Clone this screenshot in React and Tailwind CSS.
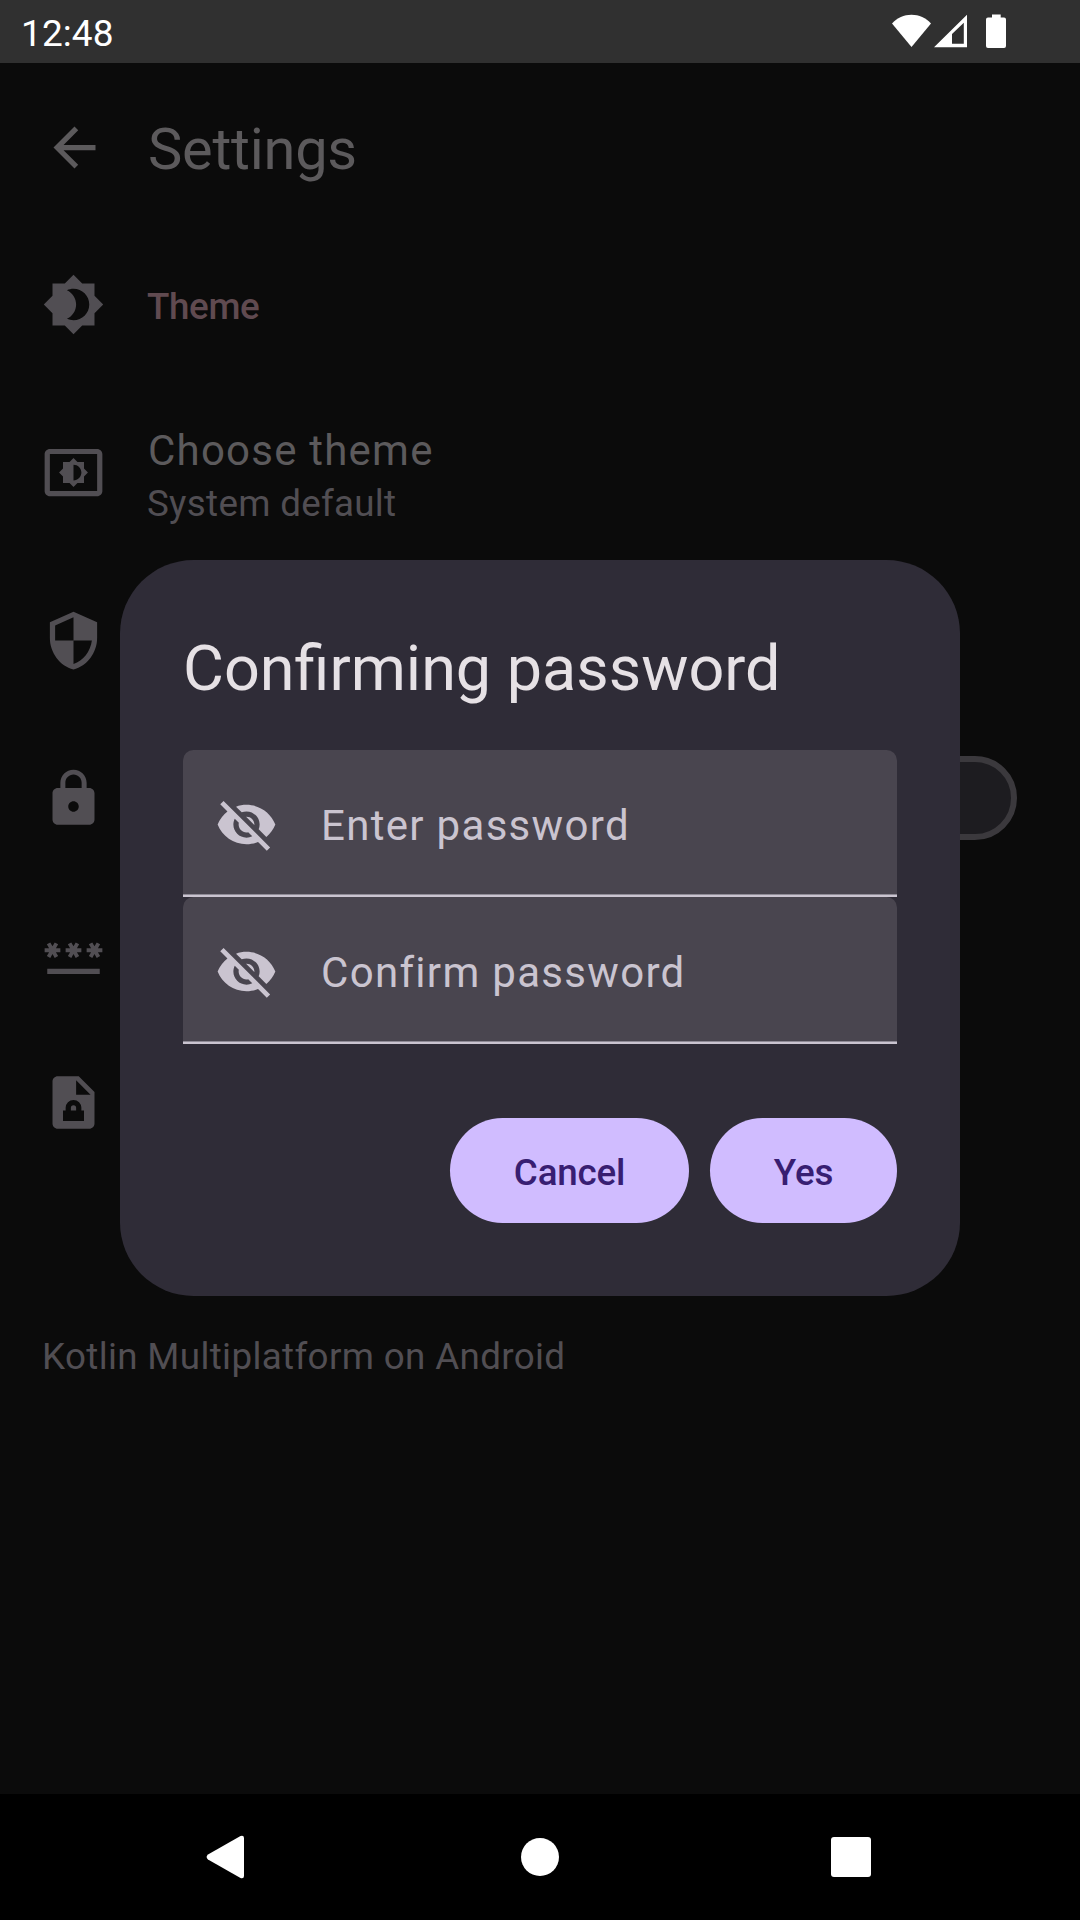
import React from "react";
import {
  MdArrowBack,
  MdBrightness4,
  MdSettingsBrightness,
  MdSecurity,
  MdLock,
  MdPassword,
  MdVisibilityOff,
} from "react-icons/md";

function DocumentLockIcon({ className }) {
  return (
    <svg viewBox="0 0 24 24" fill="currentColor" fillRule="evenodd" className={className}>
      <path d="M6 2c-1.1 0-2 .9-2 2v16c0 1.1.9 2 2 2h12c1.1 0 2-.9 2-2V8l-6-6H6zm7 7V3.5L18.500 9H13zM8 15h1v-1a3 3 0 0 1 6 0v1h1v4H8v-4zm3 0h2v-1a1 1 0 0 0-2 0v1z" />
    </svg>
  );
}

function StatusBar() {
  return (
    <header className="flex h-[63px] items-center justify-between bg-[#303030] pl-[21px] pr-[74px] text-white">
      <span className="pt-[3px] text-[37px] leading-none tracking-[0.1px]">12:48</span>
      <div className="flex items-start pb-[1px]">
        <svg className="mr-[3px] h-[34px] w-[39px]" viewBox="0 0 39 34" fill="currentColor">
          <path d="M19.500 33L0 9.500C5 4 12 .8 19.500 .8S34 4 39 9.500z" />
        </svg>
        <svg className="mr-[19px] h-[34px] w-[33px]" viewBox="0 0 33 34" fill="currentColor" fillRule="evenodd">
          <path d="M0 33.300L33 .8V33.300zM18 29.800H29.800V8.800L18 20z" />
        </svg>
        <svg className="h-[34px] w-[20px]" viewBox="0 0 20 34" fill="currentColor">
          <path d="M6 0.500h8.700v3H18a2 2 0 0 1 2 2V32a2 2 0 0 1-2 2H2a2 2 0 0 1-2-2V5.500a2 2 0 0 1 2-2h4z" />
        </svg>
      </div>
    </header>
  );
}

function SettingsRow({ icon: Icon, tall = false, children }) {
  return (
    <div className={`flex items-center gap-[42px] px-[42px] ${tall ? "h-[168px]" : "h-[147px]"}`}>
      <Icon className="size-[63px] shrink-0 text-[#514e53]" />
      {children}
    </div>
  );
}

function Settings() {
  return (
    <main className="flex grow flex-col">
      <div className="flex h-[168px] items-center gap-[42px] pl-[43px]">
        <MdArrowBack className="size-[63px] text-[#5c5a5c]" />
        <h1 className="pt-[6px] text-[57.75px] leading-[73.5px] tracking-[-0.25px] text-[#5c5a5c]">Settings</h1>
      </div>
      <SettingsRow icon={MdBrightness4}>
        <h2 className="pt-[6px] text-[36.75px] font-medium leading-[52.5px] tracking-[-0.35px] text-[#604a50]">Theme</h2>
      </SettingsRow>
      <div className="flex h-[189px] items-center gap-[42px] px-[42px]">
        <MdSettingsBrightness className="size-[63px] text-[#514e53]" />
        <div className="pt-[9px]">
          <div className="pl-[1px] text-[42px] leading-[54px] tracking-[1.22px] text-[#5c5a5c]">Choose theme</div>
          <div className="text-[36.75px] leading-[52px] tracking-[0.3px] text-[#514e53]">System default</div>
        </div>
      </div>
      <SettingsRow icon={MdSecurity} />
      <SettingsRow icon={MdLock} tall>
        <div className="ml-auto mr-[21px] h-[84px] w-[136px] rounded-full border-[6px] border-[#3b393d] bg-[#1d1c20]" />
      </SettingsRow>
      <SettingsRow icon={MdPassword} />
      <SettingsRow icon={DocumentLockIcon} />
      <p className="mt-[155px] px-[42px] text-[36.75px] leading-[52px] tracking-[0.36px] text-[#514e53]">
        Kotlin Multiplatform on Android
      </p>
    </main>
  );
}

function PasswordField({ label }) {
  return (
    <div className="flex h-[147px] flex-col overflow-hidden rounded-t-[10.5px] bg-[#49454f]">
      <div className="flex h-[144px] items-center gap-[43.5px] pl-[31.5px] pt-[5px] text-[#cac4d0]">
        <MdVisibilityOff className="size-[63px]" />
        <span className="pt-[1px] text-[42px] leading-[63px] tracking-[1.31px]">{label}</span>
      </div>
      <div className="h-[3px] border-t border-[#8f8b96] bg-[#cac4d0]" />
    </div>
  );
}

function DialogButton({ className, children }) {
  return (
    <button
      className={`h-[105px] rounded-full bg-[#d0bcff] pt-[4px] text-center text-[36.75px] font-medium leading-[52px] tracking-[-0.2px] text-[#381e72] ${className}`}
    >
      {children}
    </button>
  );
}

function PasswordDialog() {
  return (
    <div className="absolute left-[120px] top-[560px] flex h-[736px] w-[840px] flex-col rounded-[73.5px] bg-[#2f2c37] p-[63px]">
      <h2 className="h-[127px] pt-[4px] text-[62.9px] leading-[84px] text-[#e6e1e5]">Confirming password</h2>
      <PasswordField label="Enter password" />
      <PasswordField label="Confirm password" />
      <div className="mt-[74px] flex justify-end gap-[21px]">
        <DialogButton className="w-[239px]">Cancel</DialogButton>
        <DialogButton className="w-[187px]">Yes</DialogButton>
      </div>
    </div>
  );
}

function NavigationBar() {
  return (
    <nav className="flex h-[126px] items-center justify-between bg-black pl-[206px] pr-[209px] text-white">
      <svg className="h-[44px] w-[38px]" viewBox="0 0 38 44" fill="currentColor">
        <path d="M2 19.500L34.500 1Q38 0 38 3V41Q38 44 34.500 43L2 24.500Q-.8 22 2 19.500z" />
      </svg>
      <div className="ml-[5px] size-[38.5px] rounded-full bg-white" />
      <div className="size-[40px] rounded-[3px] bg-white" />
    </nav>
  );
}

export default function App() {
  return (
    <div className="relative flex h-[1920px] w-[1080px] flex-col overflow-hidden bg-[#0b0b0b] font-['Roboto',sans-serif]">
      <StatusBar />
      <Settings />
      <NavigationBar />
      <PasswordDialog />
    </div>
  );
}
